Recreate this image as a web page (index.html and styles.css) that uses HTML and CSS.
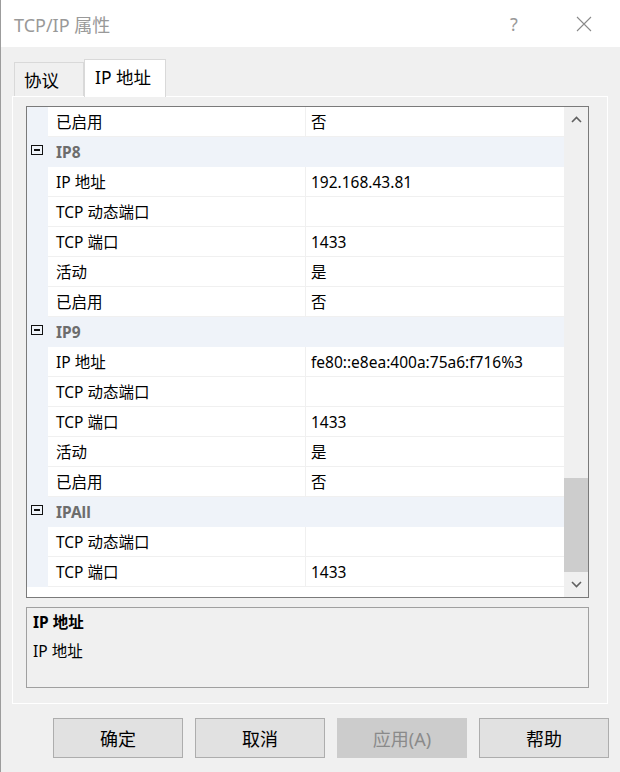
FILE: index.html
```html
<!DOCTYPE html>
<html lang="zh-CN">
<head>
<meta charset="utf-8">
<title>TCP/IP 属性</title>
<link rel="stylesheet" href="styles.css">
</head>
<body>
<div class="window">
  <div class="titlebar">
    <span class="title">TCP/IP 属性</span>
    <span class="tbtn help">?</span>
    <span class="tbtn close">
      <svg width="16" height="16" viewBox="0 0 16 16"><path d="M1 1 L15 15 M15 1 L1 15" stroke="#8a8a8a" stroke-width="1.1" fill="none"/></svg>
    </span>
  </div>
  <div class="body">
    <div class="tabs">
      <div class="tab">协议</div>
      <div class="tab active">IP 地址</div>
    </div>
    <div class="tabpage">
      <div class="listbox">
        <div class="rows">
          <div class="row"><div class="gut"></div><div class="lbl">已启用</div><div class="val">否</div></div>
          <div class="row cat"><div class="gut"><span class="exp"></span></div><div class="catname">IP8</div></div>
          <div class="row"><div class="gut"></div><div class="lbl">IP 地址</div><div class="val">192.168.43.81</div></div>
          <div class="row"><div class="gut"></div><div class="lbl">TCP 动态端口</div><div class="val"></div></div>
          <div class="row"><div class="gut"></div><div class="lbl">TCP 端口</div><div class="val">1433</div></div>
          <div class="row"><div class="gut"></div><div class="lbl">活动</div><div class="val">是</div></div>
          <div class="row"><div class="gut"></div><div class="lbl">已启用</div><div class="val">否</div></div>
          <div class="row cat"><div class="gut"><span class="exp"></span></div><div class="catname">IP9</div></div>
          <div class="row"><div class="gut"></div><div class="lbl">IP 地址</div><div class="val">fe80::e8ea:400a:75a6:f716%3</div></div>
          <div class="row"><div class="gut"></div><div class="lbl">TCP 动态端口</div><div class="val"></div></div>
          <div class="row"><div class="gut"></div><div class="lbl">TCP 端口</div><div class="val">1433</div></div>
          <div class="row"><div class="gut"></div><div class="lbl">活动</div><div class="val">是</div></div>
          <div class="row"><div class="gut"></div><div class="lbl">已启用</div><div class="val">否</div></div>
          <div class="row cat"><div class="gut"><span class="exp"></span></div><div class="catname">IPAll</div></div>
          <div class="row"><div class="gut"></div><div class="lbl">TCP 动态端口</div><div class="val"></div></div>
          <div class="row"><div class="gut"></div><div class="lbl">TCP 端口</div><div class="val">1433</div></div>
        </div>
        <div class="scrollbar">
          <div class="sbtn">
            <svg width="11" height="7" viewBox="0 0 11 7"><path d="M1 6 L5.5 1.5 L10 6" stroke="#606060" stroke-width="1.6" fill="none"/></svg>
          </div>
          <div class="track"><div class="thumb"></div></div>
          <div class="sbtn">
            <svg width="11" height="7" viewBox="0 0 11 7"><path d="M1 1 L5.5 5.5 L10 1" stroke="#606060" stroke-width="1.6" fill="none"/></svg>
          </div>
        </div>
      </div>
      <div class="desc">
        <div class="desc-title">IP 地址</div>
        <div class="desc-text">IP 地址</div>
      </div>
    </div>
    <div class="buttons">
      <div class="btn">确定</div>
      <div class="btn">取消</div>
      <div class="btn disabled">应用(A)</div>
      <div class="btn">帮助</div>
    </div>
  </div>
</div>
</body>
</html>
```

FILE: styles.css
```css
* { box-sizing: border-box; }
html, body { margin: 0; padding: 0; }
body {
  width: 620px;
  height: 772px;
  overflow: hidden;
  background: #f0f0f0;
  font-family: "Noto Sans", "Noto Sans CJK SC", sans-serif;
  color: #000;
}
.window {
  height: 772px;
  display: flex;
  flex-direction: column;
  border-left: 1px solid #9c9c9c;
}
.titlebar {
  height: 47px;
  background: #fff;
  display: flex;
  align-items: center;
  padding-left: 13px;
  padding-right: 16px;
}
.title {
  flex: 1;
  font-size: 18px;
  color: #999;
}
.tbtn {
  width: 40px;
  display: flex;
  justify-content: center;
  align-items: center;
  color: #999;
}
.help { font-size: 18px; margin-right: 30px; }
.close svg { display: block; }

.body { flex: 1; display: flex; flex-direction: column; }

.tabs {
  display: flex;
  align-items: flex-end;
  padding-top: 12px;
  padding-left: 13px;
  height: 49px;
}
.tab {
  height: 34px;
  width: 70px;
  border: 1px solid #d9d9d9;
  border-bottom: none;
  background: #f0f0f0;
  font-size: 17.5px;
  padding-left: 9px;
  padding-bottom: 1px;
  display: flex;
  align-items: center;
}
.tab.active {
  height: 38px;
  width: 82px;
  margin-bottom: -1px;
  background: #fff;
  padding-left: 10px;
  padding-bottom: 5px;
  position: relative;
  z-index: 1;
}

.tabpage {
  margin-left: 11px;
  width: 596px;
  height: 608px;
  border: 1px solid #fff;
  background: #f0f0f0;
  padding: 9px 0 0 13px;
}
.listbox {
  width: 563px;
  height: 492px;
  border: 1px solid #7a7a7a;
  background: #fff;
  display: flex;
}
.rows { width: 537px; display: flex; flex-direction: column; }
.row {
  height: 30px;
  display: flex;
  font-size: 15.5px;
  line-height: 30px;
}
.gut { width: 21px; background: #eff3f9; flex: none; }
.lbl {
  width: 257px;
  padding-left: 8px;
  border-bottom: 1px solid #f0f0f0;
  white-space: nowrap;
}
.val {
  flex: 1;
  padding-left: 5px;
  border-left: 1px solid #f0f0f0;
  border-bottom: 1px solid #f0f0f0;
  white-space: nowrap;
}
.row.cat { background: #eff3f9; }
.cat .gut { padding: 8px 0 0 4px; }
.catname {
  padding-left: 8px;
  font-weight: bold;
  color: #6d6d6d;
}
.exp {
  display: flex;
  align-items: center;
  justify-content: center;
  width: 12px;
  height: 10px;
  border: 1.5px solid #111;
}
.exp::after {
  content: "";
  width: 6px;
  height: 1.5px;
  background: #111;
}
.scrollbar {
  width: 24px;
  background: #f0f0f0;
  display: flex;
  flex-direction: column;
}
.sbtn {
  height: 25px;
  display: flex;
  align-items: center;
  justify-content: center;
}
.sbtn svg { display: block; }
.track { flex: 1; display: flex; flex-direction: column; justify-content: flex-end; }
.thumb { height: 94px; background: #cdcdcd; }

.desc {
  margin-top: 9px;
  width: 563px;
  height: 81px;
  border: 1px solid #a0a0a0;
  padding: 0 0 0 6px;
  font-size: 15.5px;
  line-height: 29px;
}
.desc-title { font-weight: bold; }

.buttons {
  display: flex;
  gap: 12px;
  padding-left: 52px;
  margin-top: 14px;
}
.btn {
  width: 130px;
  height: 40px;
  background: #e1e1e1;
  border: 1px solid #adadad;
  font-size: 18px;
  display: flex;
  align-items: center;
  justify-content: center;
}
.btn.disabled {
  background: #cccccc;
  border-color: #cccccc;
  color: #8a8a8a;
}
```
